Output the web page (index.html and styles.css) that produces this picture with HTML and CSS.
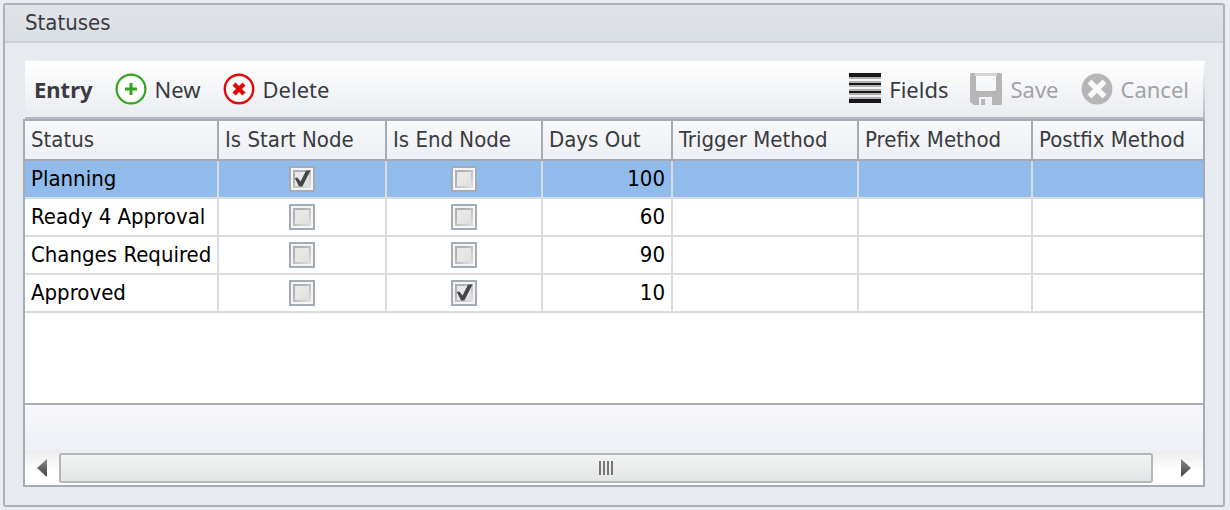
FILE: index.html
```html
<!DOCTYPE html>
<html lang="en">
<head>
<meta charset="utf-8">
<title>Statuses</title>
<link rel="stylesheet" href="styles.css">
</head>
<body>
<section class="panel">
  <h1 class="panel-title">Statuses</h1>
  <div class="panel-body">
    <div class="toolbar">
      <span class="toolbar-label">Entry</span>
      <button class="tool" type="button">
        <svg class="icon" viewBox="0 0 32 32" aria-hidden="true"><circle cx="16" cy="16" r="14.4" fill="#fff" stroke="#35a31c" stroke-width="2.2"/><path d="M16 10v12M10 16h12" stroke="#35a31c" stroke-width="3"/></svg>
        <span>New</span>
      </button>
      <button class="tool" type="button">
        <svg class="icon" viewBox="0 0 32 32" aria-hidden="true"><circle cx="16" cy="16" r="14.2" fill="#fff" stroke="#e10a0a" stroke-width="2.4"/><path d="M11 11l10 10M21 11l-10 10" stroke="#e10a0a" stroke-width="4.400"/></svg>
        <span>Delete</span>
      </button>
      <div class="tools-end">
        <button class="tool" type="button">
          <svg class="icon" viewBox="0 0 32 32" aria-hidden="true"><path d="M0 4h32v2H0zM0 8h32v6H0zM0 16h32v6H0zM0 24h32v2H0z" fill="#b0b0b1"/><path d="M0 0h32v4H0zM0 10h32v2H0zM0 18h32v2H0zM0 26h32v4H0z" fill="#17171a"/></svg>
          <span>Fields</span>
        </button>
        <button class="tool" type="button" disabled>
          <svg class="icon" viewBox="0 0 32 32" aria-hidden="true"><path fill="#b6b6b6" fill-rule="evenodd" d="M1 0h30l1 1v30l-1 1h-9v-8H9v8H4l-4-3V1zM6 3v14l1 1h18l1-1V3z"/><path fill="#d4d4d4" d="M5 0h22v3H5z"/><path fill="#b6b6b6" d="M11 26h4v6h-4z"/></svg>
          <span>Save</span>
        </button>
        <button class="tool" type="button" disabled>
          <svg class="icon" viewBox="0 0 32 32" aria-hidden="true"><circle cx="16" cy="16" r="15.400" fill="#b6b6b6"/><path d="M8.500 8.500l15 15M23.500 8.500l-15 15" stroke="#f8f8f9" stroke-width="5.600"/></svg>
          <span>Cancel</span>
        </button>
      </div>
    </div>
    <div class="grid">
      <table class="table">
        <colgroup><col class="c-status"><col class="c-start"><col class="c-end"><col class="c-days"><col class="c-trigger"><col class="c-prefix"><col></colgroup>
        <thead>
          <tr><th>Status</th><th>Is Start Node</th><th>Is End Node</th><th>Days Out</th><th>Trigger Method</th><th>Prefix Method</th><th>Postfix Method</th></tr>
        </thead>
        <tbody>
          <tr class="selected"><td>Planning</td><td class="check"><input type="checkbox" aria-label="Planning: is start node" checked></td><td class="check"><input type="checkbox" aria-label="Planning: is end node"></td><td class="num">100</td><td></td><td></td><td></td></tr>
          <tr><td>Ready 4 Approval</td><td class="check"><input type="checkbox" aria-label="Ready 4 Approval: is start node"></td><td class="check"><input type="checkbox" aria-label="Ready 4 Approval: is end node"></td><td class="num">60</td><td></td><td></td><td></td></tr>
          <tr><td>Changes Required</td><td class="check"><input type="checkbox" aria-label="Changes Required: is start node"></td><td class="check"><input type="checkbox" aria-label="Changes Required: is end node"></td><td class="num">90</td><td></td><td></td><td></td></tr>
          <tr><td>Approved</td><td class="check"><input type="checkbox" aria-label="Approved: is start node"></td><td class="check"><input type="checkbox" aria-label="Approved: is end node" checked></td><td class="num">10</td><td></td><td></td><td></td></tr>
        </tbody>
      </table>
      <div class="footer"></div>
      <div class="scrollbar">
        <button class="arrow" type="button" aria-label="Scroll left"><svg class="arrow-icon" viewBox="0 0 10 18" aria-hidden="true"><defs><linearGradient id="shade" x1="0" y1="0" x2="0" y2="1"><stop offset="0" stop-color="#8c8c8c"/><stop offset="1" stop-color="#3f3f3f"/></linearGradient></defs><path d="M10 0v18L0 9z" fill="url(#shade)"/></svg></button>
        <div class="thumb"><span class="grip"></span></div>
        <button class="arrow" type="button" aria-label="Scroll right"><svg class="arrow-icon" viewBox="0 0 10 18" aria-hidden="true"><path d="M0 0v18l10-9z" fill="url(#shade)"/></svg></button>
      </div>
    </div>
  </div>
</section>
</body>
</html>
```
FILE: styles.css
```css
* { box-sizing: border-box; }

body {
  margin: 0;
  min-height: 100vh;
  padding: 3px 5px 3px 3px;
  display: flex;
  background: #e9ecf0;
  color: #3a3a40;
  font-family: "DejaVu Sans Condensed", Tahoma, sans-serif;
  font-size: 22px;
  line-height: 28px;
}

button { font: inherit; color: inherit; background: none; border: 0; padding: 0; }

.panel {
  flex: 1;
  min-width: 0;
  display: flex;
  flex-direction: column;
  border: 2px solid #adb2b9;
  border-radius: 3px;
  background: #e7ebf0;
}

.panel-title {
  margin: 0;
  padding: 4px 20px;
  border-bottom: 2px solid #cdd1d6;
  background: linear-gradient(#e0e4e8, #dadfe3);
  font-size: 22px;
  font-weight: 400;
}

.panel-body {
  flex: 1;
  display: flex;
  flex-direction: column;
  padding: 18px;
}

.toolbar {
  display: flex;
  align-items: center;
  gap: 22px;
  height: 58px;
  margin-left: 2px;
  padding: 0 14px 0 9px;
  border-right: 2px solid;
  border-bottom: 2px solid #b4b9c1;
  border-image: linear-gradient(#ffffff, #b4b9c1) 2;
  border-left: 0;
  border-top: 0;
  background: linear-gradient(#ffffff, #e9ecf1);
  font-family: "Noto Sans", sans-serif;
}

.toolbar-label { font-weight: 700; }
.tools-end { display: flex; gap: 22px; margin-left: auto; }
.tool { display: flex; align-items: center; gap: 8px; }
.tool:disabled { color: #a2a2a5; }
.icon { width: 32px; height: 32px; flex: none; }

.grid {
  flex: 1;
  display: flex;
  flex-direction: column;
  border: 2px solid #a3abb6;
  background: #fff;
}

.table {
  width: 100%;
  table-layout: fixed;
  border-collapse: separate;
  border-spacing: 0;
}

.c-status { width: 194px; }
.c-start { width: 168px; }
.c-end { width: 156px; }
.c-days { width: 130px; }
.c-trigger { width: 186px; }
.c-prefix { width: 174px; }

th, td {
  padding: 0 6px;
  white-space: nowrap;
  border-right: 2px solid #d9dcdf;
  border-bottom: 2px solid #d9dcdf;
}

th {
  height: 40px;
  text-align: left;
  font-weight: 400;
  border-color: #a3abb6;
  background: linear-gradient(#f7f8fa, #edf0f4);
}

td { height: 38px; color: #000; }
th:last-child, td:last-child { border-right: 0; }
.selected td { background: #90bbea; background-clip: padding-box; }
.check { text-align: center; line-height: 0; }
.num { text-align: right; }

input[type="checkbox"] {
  appearance: none;
  width: 26px;
  height: 26px;
  margin: 0;
  vertical-align: middle;
  border: 2px solid #a3abb6;
  background:
    linear-gradient(135deg, #b0b0b0 30%, #e4e4e4) 2px 2px / 18px 18px no-repeat,
    #f5f5f5;
  position: relative;
}

input[type="checkbox"]::before {
  content: "";
  position: absolute;
  inset: 4px;
  background: linear-gradient(135deg, #e8e8e8 40%, #dedede);
}

input[type="checkbox"]:checked::after {
  content: "";
  position: absolute;
  inset: 2px;
  background: #444649;
  clip-path: polygon(10% 44%, 24% 42%, 42% 64%, 72% 4%, 98% 2%, 52% 92%, 34% 92%);
}

.footer {
  height: 48px;
  margin-top: auto;
  border-top: 2px solid #a9abb9;
  background: linear-gradient(#f7f7fa, #f3f4f8 50%, #eff3f7 60%, #edf1f5);
}

.scrollbar {
  display: flex;
  height: 34px;
  padding: 2px 0;
  background: linear-gradient(#ececec, #ffffff 60%);
}

.arrow { width: 34px; display: flex; align-items: center; justify-content: center; }
.arrow-icon { width: 10px; height: 18px; }

.thumb {
  flex: 1;
  display: flex;
  align-items: center;
  justify-content: center;
  margin-right: 16px;
  border: 2px solid #b3b6bc;
  border-radius: 3px;
  background: linear-gradient(#f2f4f3, #e3e4e5);
}

.grip {
  width: 14px;
  height: 14px;
  background: repeating-linear-gradient(90deg, #777 0 2px, transparent 2px 4px);
}
```
